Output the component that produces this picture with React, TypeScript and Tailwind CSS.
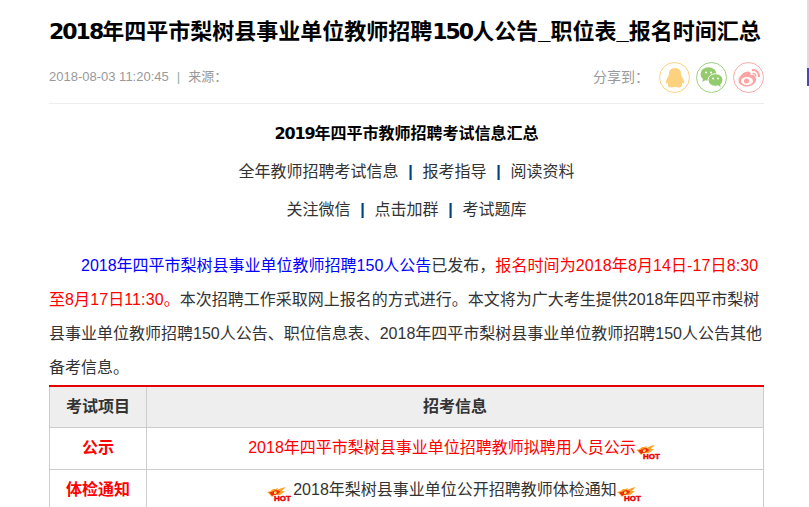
const Hot = () => (
  <svg width="26" height="16" viewBox="0 0 26 16" className="inline-block align-[-7px]">
    <path d="M0 6 C2 6 4 5 6 3 C8 3 9 3 11 2 L10 4 C12 3 14 2 19 1 C17 3 15 4 15 5 C16 5 17 5 18 5 C16 7 14 8 13 9 L7 9 L5 11 C3 9 2 7 0 6 Z" fill="#f9a52c" />
    <path d="M2 6 C4 7 6 5 9 4 C11 4 13 5 13 6 C12 8 9 8 7 9 L5 10 Z" fill="#ee2a10" />
    <path d="M7 6 C8 5 9 5 10 6 L9 8 L7 8 Z" fill="#ffd75a" />
    <text x="7" y="15" fontSize="8" fontWeight="900" stroke="#ee0000" strokeWidth="0.5" fill="#ee0000" fontFamily="Liberation Sans, sans-serif">HOT</text>
  </svg>
);

const ShareIcon = ({ color, children }: { color: string; children: React.ReactNode }) => (
  <div className="w-[31px] h-[31px] rounded-full border flex items-center justify-center" style={{ borderColor: color }}>
    {children}
  </div>
);

const Sep = () => <span className="mx-[9.75px] font-bold text-[#004080]">|</span>;

const TitleNum = ({ children }: { children: React.ReactNode }) => (
  <span className="font-['DejaVu_Sans'] tracking-[-2px]">{children}</span>
);

export default function App() {
  return (
    <div className="relative w-[809px] h-[507px] overflow-hidden bg-white font-['Liberation_Sans','Noto_Sans_CJK_SC',sans-serif] text-[#333]">
      {/* Sidebar sliver at the right edge */}
      <div className="absolute right-0 top-0 w-[2px] h-[86px] flex flex-col">
        <div className="h-[68px] bg-[#f3d3dc]" />
        <div className="h-[18px] bg-[#5346ab]" />
      </div>

      <div className="ml-[49px] w-[715px] pt-[16px]">
        <h1 className="text-[22px] leading-[32px] font-bold text-black whitespace-nowrap">
          <TitleNum>2018</TitleNum>年四平市梨树县事业单位教师招聘<TitleNum>150</TitleNum>人公告_职位表_报名时间汇总
        </h1>

        <div className="mt-[10px] h-[46px] border-b border-[#eeeeee] flex items-start justify-between">
          <div className="pt-[10px] text-[13px] leading-[18px] text-[#999] whitespace-nowrap">
            2018-08-03 11:20:45<span className="mx-[8px] text-[#8fb09a]">|</span>来源：
          </div>
          <div className="flex items-center pt-[4px]">
            <span className="text-[14px] text-[#999] mr-[10px]">分享到：</span>
            <div className="flex gap-[6px]">
              <ShareIcon color="#fdd27f">
                <svg width="22" height="20" viewBox="0 0 22 20">
                  <path d="M11 0 C15.500 0 17 3 17 6 C17 8 19 10 20 13 C21 15.500 19.500 16.500 18 14.500 C18 16 18.500 18 17 19 C15 20 13 19 11 19 C9 19 7 20 5 19 C3.500 18 4 16 4 14.500 C2.500 16.500 1 15.500 2 13 C3 10 5 8 5 6 C5 3 6.500 0 11 0 Z" fill="#fdd27f" />
                </svg>
              </ShareIcon>
              <ShareIcon color="#9fd07f">
                <svg width="23" height="21" viewBox="0 0 23 21">
                  <ellipse cx="8.500" cy="7" rx="8" ry="6.800" fill="#93cb6d" />
                  <path d="M3 11 L2.500 15 L7 12 Z" fill="#93cb6d" />
                  <ellipse cx="15.500" cy="13" rx="7.500" ry="6.300" fill="#93cb6d" stroke="#fff" />
                  <path d="M18 17.500 L20.500 20.500 L20 15 Z" fill="#93cb6d" />
                  <circle cx="6" cy="5.500" r="1.100" fill="#fff" />
                  <circle cx="11" cy="5.500" r="1.100" fill="#fff" />
                  <circle cx="13" cy="11.500" r="1" fill="#fff" />
                  <circle cx="18" cy="11.500" r="1" fill="#fff" />
                </svg>
              </ShareIcon>
              <ShareIcon color="#fda9a9">
                <svg width="22" height="18" viewBox="0 0 22 18">
                  <path d="M9 17.500 C4 17.500 0.500 15 0.500 11.500 C0.500 7.500 6 2.500 10 2.500 C12.500 2.500 13 4.500 12.500 6.500 C15 5.500 17 6 17 8 C18 8.500 18.500 10 18 11.500 C17 15 13 17.500 9 17.500 Z" fill="#fda3a3" />
                  <ellipse cx="9" cy="12" rx="6" ry="4" fill="#fff" />
                  <circle cx="8.500" cy="12" r="2.500" fill="#fda3a3" />
                  <path d="M14 1 C18 0.500 21.500 3.500 21 8" stroke="#fda3a3" strokeWidth="2" fill="none" />
                  <path d="M14.500 4.500 C16.500 4 18 5.500 17.800 7.500" stroke="#fda3a3" strokeWidth="1.500" fill="none" />
                </svg>
              </ShareIcon>
            </div>
          </div>
        </div>

        <div className="text-center text-[16px] leading-[38px] pt-[11px]">
          <p className="font-bold text-black">
            <span className="font-['DejaVu_Sans'] tracking-[-1.1px]">2019</span>年四平市教师招聘考试信息汇总
          </p>
          <p>
            全年教师招聘考试信息<Sep />报考指导<Sep />阅读资料
          </p>
          <p>
            关注微信<Sep />点击加群<Sep />考试题库
          </p>
        </div>

        <p className="mt-[20px] text-[16px] leading-[34px] indent-[32px] text-[#333]">
          <span className="text-[#0000ff]">2018年四平市梨树县事业单位教师招聘150人公告</span>
          已发布，
          <span className="text-[#ff0000] tracking-[0.1px]">报名时间为2018年8月14日-17日8:30至8月17日11:30。</span>
          本次招聘工作采取网上报名的方式进行。本文将为广大考生提供2018年四平市梨树县事业单位教师招聘150人公告、职位信息表、2018年四平市梨树县事业单位教师招聘150人公告其他备考信息。
        </p>

        <table className="w-full border-collapse border-t-2 border-t-[#e60000] text-[16px] table-fixed">
          <colgroup>
            <col className="w-[97px]" />
            <col />
          </colgroup>
          <tbody>
            <tr className="h-[41px] bg-[#eeeeee] font-bold">
              <td className="border border-[#cccccc] border-t-0 text-center">考试项目</td>
              <td className="border border-[#cccccc] border-t-0 text-center">招考信息</td>
            </tr>
            <tr className="h-[42px]">
              <td className="border border-[#cccccc] text-center font-bold text-[#ff0000]">公示</td>
              <td className="border border-[#cccccc] text-center text-[#ff0000]">
                2018年四平市梨树县事业单位招聘教师拟聘用人员公示
                <Hot />
              </td>
            </tr>
            <tr className="h-[42px]">
              <td className="border border-[#cccccc] text-center font-bold text-[#ff0000]">体检通知</td>
              <td className="border border-[#cccccc] text-center">
                <Hot />
                2018年梨树县事业单位公开招聘教师体检通知
                <Hot />
              </td>
            </tr>
          </tbody>
        </table>
      </div>
    </div>
  );
}
